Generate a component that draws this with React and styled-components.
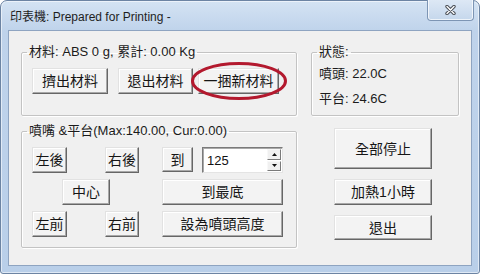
import React from "react";
import styled, { createGlobalStyle } from "styled-components";

const FONT = `"Liberation Sans", "Noto Sans CJK TC", sans-serif`;

const GlobalStyle = createGlobalStyle`
  html, body {
    margin: 0;
    padding: 0;
    background: #ffffff;
  }
  body {
    width: 480px;
    height: 274px;
    overflow: hidden;
  }
`;

const Window = styled.div`
  box-sizing: border-box;
  width: 480px;
  height: 274px;
  display: flex;
  flex-direction: column;
  background: linear-gradient(#d4e3f3, #bfd3eb 30px, #b9cfe9);
  border: 1px solid #6c84a3;
  border-radius: 7px 7px 3px 3px;
  box-shadow: inset 0 0 0 1px rgba(255, 255, 255, 0.55);
  font-family: ${FONT};
  color: #1b1b1b;
`;

const TitleBar = styled.div`
  height: 29px;
  display: flex;
  align-items: flex-start;
  justify-content: space-between;
  padding-left: 9px;
`;

const Title = styled.div`
  margin-top: 8px;
  font-size: 12px;
  line-height: 16px;
  color: #1e1e1e;
`;

const CloseButton = styled.div`
  box-sizing: border-box;
  width: 47px;
  height: 21px;
  margin: -1px 5px 0 0;
  display: flex;
  align-items: center;
  justify-content: center;
  background: linear-gradient(#dde8f5, #c5d7ec);
  border: 1px solid #7d95b4;
  border-top: none;
  border-radius: 0 0 4px 4px;
  box-shadow: inset 0 -1px 0 rgba(255, 255, 255, 0.7),
    inset 1px 0 0 rgba(255, 255, 255, 0.7), inset -1px 0 0 rgba(255, 255, 255, 0.7);
`;

const Client = styled.div`
  box-sizing: border-box;
  height: 236px;
  margin: 0 7px;
  padding: 13px 12px 0;
  display: flex;
  gap: 14px;
  background: #f0f0f0;
  border: 1px solid #8ea4c1;
`;

const Column = styled.div`
  width: ${(p) => p.$w}px;
  display: flex;
  flex-direction: column;
  gap: ${(p) => p.$gap}px;
`;

const Group = styled.fieldset`
  box-sizing: border-box;
  position: relative;
  margin: 0;
  min-width: 0;
  height: ${(p) => p.$h}px;
  padding: ${(p) => p.$pt}px 4px 0 5px;
  border: 1px solid #c3c3c3;
  border-radius: 2px;
  box-shadow: inset 1px 1px 0 #ffffff, 1px 1px 0 #ffffff;
`;

const Legend = styled.legend`
  padding: 0 2px;
  font-size: 13px;
  line-height: 16px;
  color: #1b1b1b;
`;

const Button = styled.button`
  box-sizing: border-box;
  width: ${(p) => p.$w}px;
  height: ${(p) => p.$h || 26}px;
  margin: 0;
  padding: 0;
  font-family: ${FONT};
  font-size: 14px;
  line-height: 1;
  color: #151515;
  background: #f3f3f3;
  border: 1px solid;
  border-color: #e2e2e2 #666666 #666666 #e2e2e2;
  border-radius: 0;
  box-shadow: inset -1px -1px 0 #a8a8a8, inset 1px 1px 0 #ffffff;
  flex: none;
`;

const ButtonRow = styled.div`
  display: flex;
  align-items: flex-start;
  padding-left: 5px;
`;

const Highlight = styled.span`
  position: relative;
  display: inline-flex;
  margin-left: ${(p) => p.$ml}px;
`;

const Ring = styled.svg`
  position: absolute;
  left: -8px;
  top: -7px;
  pointer-events: none;
`;

const PadArea = styled.div`
  display: flex;
  gap: 23px;
  padding-left: 5px;
`;

const Pad = styled.div`
  width: ${(p) => p.$w}px;
  display: flex;
  flex-direction: column;
  gap: 6px;
`;

const PadRow = styled.div`
  display: flex;
  align-items: flex-start;
  justify-content: ${(p) => p.$justify || "flex-start"};
  gap: ${(p) => p.$gap || 0}px;
  padding-left: ${(p) => p.$indent || 0}px;
`;

const SpinBox = styled.div`
  box-sizing: border-box;
  width: 81px;
  height: 26px;
  display: flex;
  align-items: stretch;
  background: #ffffff;
  border: 1px solid;
  border-color: #7a7a7a #e4e4e4 #e4e4e4 #7a7a7a;
  box-shadow: inset 1px 1px 0 #a9a9a9;
`;

const SpinValue = styled.div`
  flex: 1;
  padding: 0 0 0 4px;
  display: flex;
  align-items: center;
  font-size: 13px;
  color: #111;
`;

const SpinArrows = styled.div`
  width: 14px;
  display: flex;
  flex-direction: column;
  padding: 1px 1px 1px 0;
  gap: 1px;
`;

const SpinArrow = styled.div`
  flex: 1;
  display: flex;
  align-items: center;
  justify-content: center;
  background: #f0f0f0;
  border: 1px solid;
  border-color: #f8f8f8 #7a7a7a #7a7a7a #f8f8f8;
`;

const StatusLine = styled.div`
  padding-left: 2px;
  font-size: 13px;
  line-height: 16px;
  margin-bottom: ${(p) => p.$mb || 0}px;
`;

const ActionStack = styled.div`
  display: flex;
  flex-direction: column;
  gap: 10px;
  padding-left: 23px;
`;

function Triangle({ up }) {
  return (
    <svg width="5" height="3" viewBox="0 0 5 3">
      <path d={up ? "M0 3 L2.5 0 L5 3 Z" : "M0 0 L2.5 3 L5 0 Z"} fill="#111" />
    </svg>
  );
}

export default function App() {
  return (
    <>
      <GlobalStyle />
      <Window>
        <TitleBar>
          <Title>印表機: Prepared for Printing -</Title>
          <CloseButton>
            <svg width="11" height="10" viewBox="0 0 11 10">
              <path d="M2 1.5 L9 8.5 M9 1.5 L2 8.5" stroke="#4a4f57" strokeWidth="3.4" strokeLinecap="round" />
              <path d="M2 1.5 L9 8.5 M9 1.5 L2 8.5" stroke="#ffffff" strokeWidth="1.4" strokeLinecap="round" />
            </svg>
          </CloseButton>
        </TitleBar>
        <Client>
          <Column $w={276} $gap={7}>
            <Group $h={72} $pt={8}>
              <Legend>材料: ABS 0 g, 累計: 0.00 Kg</Legend>
              <ButtonRow>
                <Button $w={76}>擠出材料</Button>
                <Button $w={75} style={{ marginLeft: 10 }}>退出材料</Button>
                <Highlight $ml={5}>
                  <Button $w={81}>一捆新材料</Button>
                  <Ring width="98" height="40" viewBox="0 0 98 40">
                    <ellipse cx="49" cy="20" rx="46.5" ry="17.5" fill="none" stroke="#b3192e" strokeWidth="3" />
                  </Ring>
                </Highlight>
              </ButtonRow>
            </Group>
            <Group $h={125} $pt={8}>
              <Legend>噴嘴 &amp;平台(Max:140.00, Cur:0.00)</Legend>
              <PadArea>
                <Pad $w={107}>
                  <PadRow $justify="space-between">
                    <Button $w={35}>左後</Button>
                    <Button $w={34}>右後</Button>
                  </PadRow>
                  <PadRow $indent={30}>
                    <Button $w={48}>中心</Button>
                  </PadRow>
                  <PadRow $justify="space-between">
                    <Button $w={35}>左前</Button>
                    <Button $w={34}>右前</Button>
                  </PadRow>
                </Pad>
                <Pad $w={121}>
                  <PadRow $gap={9}>
                    <Button $w={31} $h={25}>到</Button>
                    <SpinBox>
                      <SpinValue>125</SpinValue>
                      <SpinArrows>
                        <SpinArrow>
                          <Triangle up />
                        </SpinArrow>
                        <SpinArrow>
                          <Triangle />
                        </SpinArrow>
                      </SpinArrows>
                    </SpinBox>
                  </PadRow>
                  <PadRow>
                    <Button $w={121}>到最底</Button>
                  </PadRow>
                  <PadRow>
                    <Button $w={121}>設為噴頭高度</Button>
                  </PadRow>
                </Pad>
              </PadArea>
            </Group>
          </Column>
          <Column $w={148} $gap={12}>
            <Group $h={72} $pt={6}>
              <Legend>狀態:</Legend>
              <StatusLine $mb={9}>噴頭: 22.0C</StatusLine>
              <StatusLine>平台: 24.6C</StatusLine>
            </Group>
            <ActionStack>
              <Button $w={98} $h={41}>全部停止</Button>
              <Button $w={98}>加熱1小時</Button>
              <Button $w={98} $h={25}>退出</Button>
            </ActionStack>
          </Column>
        </Client>
      </Window>
    </>
  );
}
